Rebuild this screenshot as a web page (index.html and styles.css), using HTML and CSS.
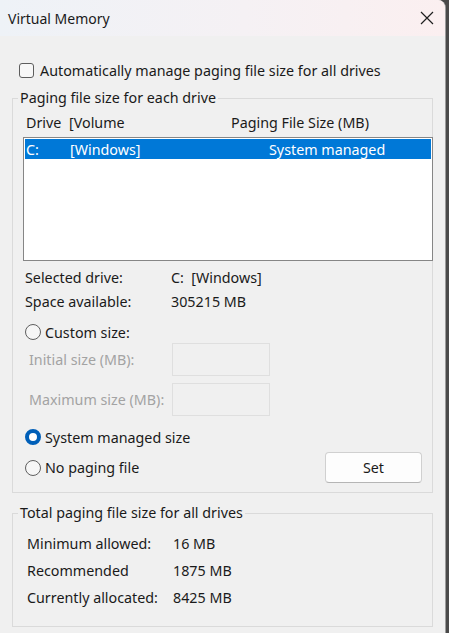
FILE: index.html
```html
<!DOCTYPE html>
<html lang="en">
<head>
    <meta charset="UTF-8">
    <meta name="viewport" content="width=device-width, initial-scale=1.0">
    <title>Virtual Memory</title>
    <link rel="stylesheet" href="styles.css">
</head>
<body>
    <div class="window">
        <div class="titlebar">
            <span class="title">Virtual Memory</span>
            <svg class="close" width="14" height="14" viewBox="0 0 14 14">
                <path d="M1 1 L13 13 M13 1 L1 13" stroke="#1f1f1f" stroke-width="1.2" fill="none"/>
            </svg>
        </div>

        <div class="content">
            <label class="row auto-row">
                <span class="checkbox"></span>
                <span>Automatically manage paging file size for all drives</span>
            </label>

            <fieldset class="group group-drive">
                <legend>Paging file size for each drive</legend>
                <div class="group-body">
                    <div class="list-header">
                        <span class="col-drive">Drive</span>
                        <span class="col-volume">[Volume</span>
                        <span class="col-size">Paging File Size (MB)</span>
                    </div>
                    <div class="listbox">
                        <div class="list-item selected">
                            <span class="col-drive">C:</span>
                            <span class="col-volume">[Windows]</span>
                            <span class="col-size">System managed</span>
                        </div>
                    </div>

                    <div class="info">
                        <div class="info-row"><span class="info-label">Selected drive:</span><span>C:&nbsp;&nbsp;[Windows]</span></div>
                        <div class="info-row"><span class="info-label">Space available:</span><span>305215 MB</span></div>
                    </div>

                    <label class="row radio-row custom-row">
                        <span class="radio"></span>
                        <span>Custom size:</span>
                    </label>
                    <div class="size-row">
                        <span class="size-label">Initial size (MB):</span>
                        <span class="size-input"></span>
                    </div>
                    <div class="size-row size-row-max">
                        <span class="size-label">Maximum size (MB):</span>
                        <span class="size-input"></span>
                    </div>

                    <label class="row radio-row system-row">
                        <span class="radio checked"></span>
                        <span>System managed size</span>
                    </label>
                    <div class="row nopage-row">
                        <label class="radio-row">
                            <span class="radio"></span>
                            <span>No paging file</span>
                        </label>
                        <button class="btn">Set</button>
                    </div>
                </div>
            </fieldset>

            <fieldset class="group group-total">
                <legend>Total paging file size for all drives</legend>
                <div class="total-body">
                    <div class="total-row"><span class="total-label">Minimum allowed:</span><span>16 MB</span></div>
                    <div class="total-row"><span class="total-label">Recommended</span><span>1875 MB</span></div>
                    <div class="total-row"><span class="total-label">Currently allocated:</span><span>8425 MB</span></div>
                </div>
            </fieldset>
        </div>
    </div>
</body>
</html>
```

FILE: styles.css
```css
* {
    margin: 0;
    padding: 0;
    box-sizing: border-box;
}

body {
    font-family: 'Noto Sans', 'Open Sans', sans-serif;
    font-size: 14.3px;
    color: #1a1a1a;
    background: #4a4a4a;
    height: 633px;
    overflow: hidden;
}

.window {
    width: 446px;
    height: 633px;
    background: #f0f0f0;
    border-right: 1px solid #9c9c9c;
    border-top-right-radius: 8px;
    overflow: hidden;
}

.titlebar {
    height: 36px;
    display: flex;
    align-items: center;
    justify-content: space-between;
    padding: 0 11px 0 8px;
    background: linear-gradient(90deg, #eef2f7 0%, #f5f1f4 55%, #fbeff0 100%);
}

.title {
    font-size: 14px;
    color: #1a1a1a;
}

.content {
    padding: 24px 12px 0 12px;
}

.row {
    display: flex;
    align-items: center;
}

.auto-row {
    height: 20px;
    padding-left: 7px;
    gap: 6px;
}

.checkbox {
    width: 15px;
    height: 15px;
    border: 1px solid #5d5d5d;
    border-radius: 3px;
    background: #f7f7f7;
}

.group {
    border: 1px solid #dadada;
    margin-top: 8px;
    padding: 0 0 0 5px;
}

.group legend {
    padding: 0 2px;
    line-height: 20px;
}

.group-body {
    padding: 4px 0 9px 5px;
}

.list-header {
    display: flex;
    height: 20px;
    align-items: center;
    padding-left: 3px;
}

.col-drive {
    width: 43px;
}

.col-volume {
    width: 162px;
}

.list-item .col-volume {
    width: 199px;
}

.listbox {
    margin-top: 5px;
    margin-right: -1px;
    height: 124px;
    border: 1px solid #868686;
    background: #fff;
    padding: 1px;
}

.list-item {
    display: flex;
    align-items: center;
    height: 20px;
    padding-left: 1px;
}

.list-item.selected {
    background: #0078d7;
    color: #fff;
}

.list-item .col-drive {
    width: 44px;
}

.info {
    margin-top: 4px;
    padding-left: 2px;
}

.info-row {
    display: flex;
    align-items: center;
    height: 24px;
}

.info-label {
    width: 146px;
}

.radio-row {
    display: flex;
    align-items: center;
    gap: 4px;
    padding-left: 2px;
}

.radio {
    width: 16px;
    height: 16px;
    border: 1px solid #5f5f5f;
    border-radius: 50%;
    background: #f6f6f6;
}

.radio.checked {
    border: 4.5px solid #005fb8;
    background: #fff;
}

.custom-row {
    margin-top: 8px;
    height: 22px;
}

.size-row {
    display: flex;
    align-items: center;
    padding-left: 6px;
}

.size-row-max {
    margin-top: 7px;
}

.size-label {
    width: 143px;
    color: #a3a3a3;
}

.size-input {
    width: 98px;
    height: 33px;
    border: 1px solid #dfdfdf;
    background: #f0f0f0;
}

.system-row {
    margin-top: 11px;
    height: 20px;
}

.nopage-row {
    margin-top: 5px;
    justify-content: space-between;
    padding-right: 10px;
}

.btn {
    width: 97px;
    height: 31px;
    font-family: inherit;
    font-size: 14.3px;
    color: #1a1a1a;
    background: #fdfdfd;
    border: 1px solid #d0d0d0;
    border-bottom-color: #b5b5b5;
    border-radius: 4px;
}

.group-total {
    margin-top: 10px;
}

.total-body {
    padding: 7px 0 15px 9px;
}

.total-row {
    display: flex;
    align-items: center;
    height: 27px;
}

.total-label {
    width: 146px;
}
```
